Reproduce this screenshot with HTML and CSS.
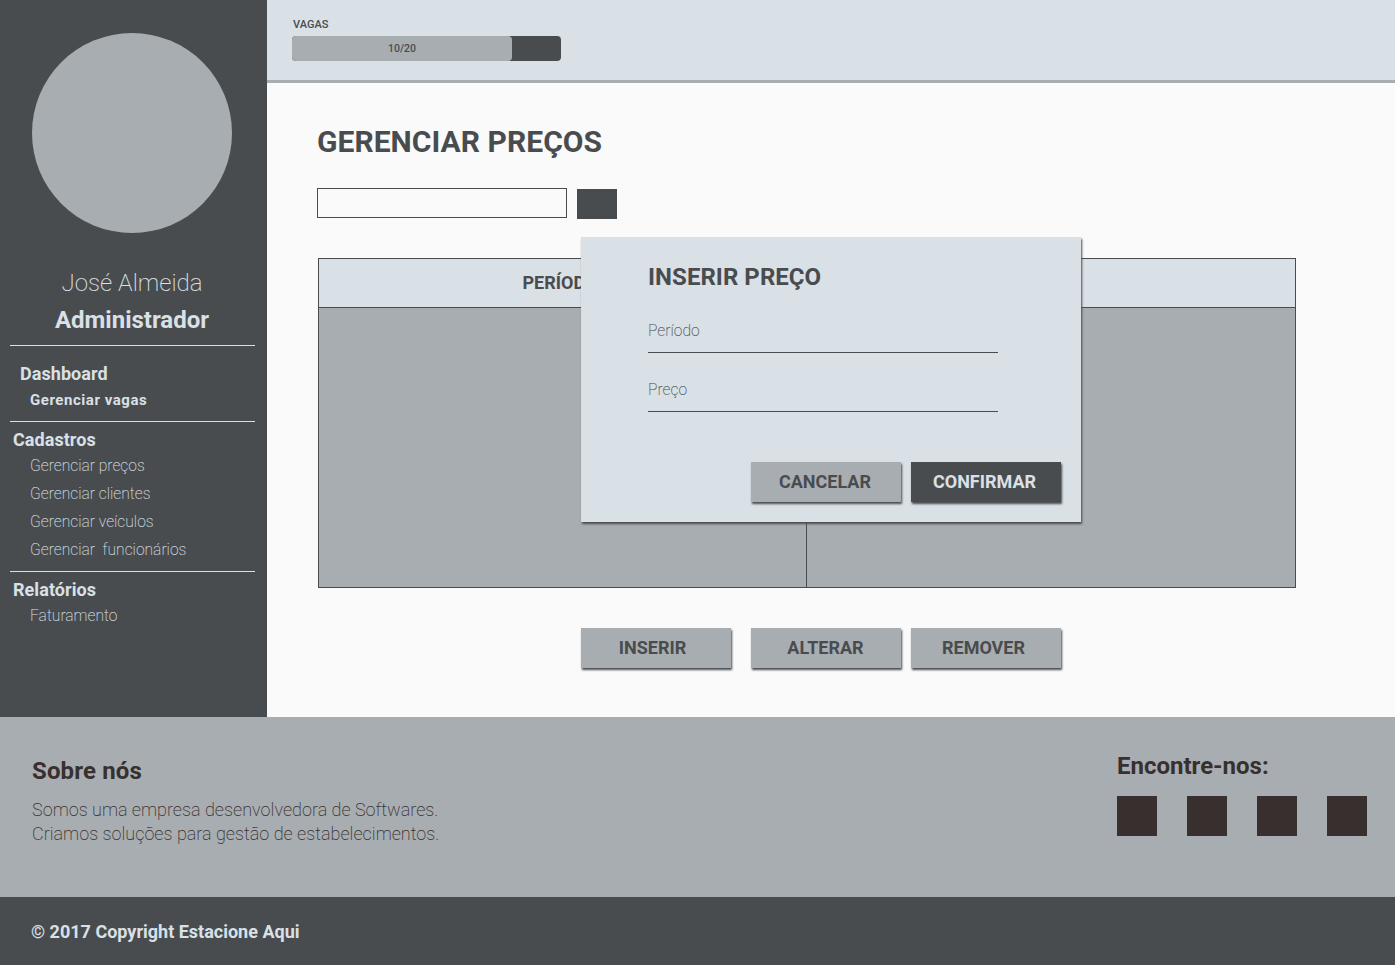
FILE: index.html
```html
<!DOCTYPE html>
<html lang="pt-BR">
<head>
    <meta charset="UTF-8">
    <meta name="viewport" content="width=device-width, initial-scale=1.0">
    <title>Gerenciar Preços - Estacione Aqui</title>
    <link rel="stylesheet" href="styles.css">
</head>
<body>

    <div class="topo">
        <!-- Menu lateral -->
        <aside class="lateral">
            <div class="avatar"></div>
            <div class="nome">José Almeida</div>
            <div class="cargo">Administrador</div>

            <nav class="menu menu-dash">
                <h4 class="menu-titulo titulo-dash">Dashboard</h4>
                <a class="ativo">Gerenciar vagas</a>
            </nav>
            <nav class="menu">
                <h4 class="menu-titulo">Cadastros</h4>
                <a>Gerenciar preços</a>
                <a>Gerenciar clientes</a>
                <a>Gerenciar veículos</a>
                <a>Gerenciar&nbsp; funcionários</a>
            </nav>
            <nav class="menu">
                <h4 class="menu-titulo">Relatórios</h4>
                <a>Faturamento</a>
            </nav>
        </aside>

        <div class="conteudo">
            <!-- Barra de vagas -->
            <header class="barra">
                <div class="vagas-label">VAGAS</div>
                <div class="vagas">
                    <div class="vagas-cheio">10/20</div>
                </div>
            </header>

            <main class="principal">
                <h1>GERENCIAR PREÇOS</h1>

                <div class="busca">
                    <input type="text" class="busca-campo">
                    <button class="busca-botao"></button>
                </div>

                <div class="tabela">
                    <div class="tabela-cab">
                        <div class="cel-cab">PERÍODO</div>
                        <div class="cel-cab">PREÇO</div>
                    </div>
                    <div class="tabela-corpo">
                        <div class="cel"></div>
                        <div class="cel"></div>
                    </div>
                </div>

                <div class="acoes">
                    <button class="btn btn-inserir">INSERIR</button>
                    <button class="btn btn-alterar">ALTERAR</button>
                    <button class="btn btn-remover">REMOVER</button>
                </div>
            </main>
        </div>
    </div>

    <!-- Rodapé -->
    <footer class="rodape">
        <div class="sobre">
            <h3>Sobre nós</h3>
            <p>Somos uma empresa desenvolvedora de Softwares.<br>Criamos soluções para gestão de estabelecimentos.</p>
        </div>
        <div class="redes">
            <h3>Encontre-nos:</h3>
            <div class="redes-lista">
                <span></span><span></span><span></span><span></span>
            </div>
        </div>
    </footer>
    <div class="copyright">© 2017 Copyright Estacione Aqui</div>

    <!-- Modal de inserir preço -->
    <div class="modal">
        <h2>INSERIR PREÇO</h2>
        <div class="campo">Período</div>
        <div class="campo">Preço</div>
        <div class="modal-acoes">
            <button class="btn btn-cancelar">CANCELAR</button>
            <button class="btn btn-escuro">CONFIRMAR</button>
        </div>
    </div>

</body>
</html>
```

FILE: styles.css
```css
body {
    font-family: Roboto, sans-serif;
    background-color: #fafafa;
    color: #494c4f;
    margin: 0;
    padding: 0;
    position: relative;
}

h1, h2, h3, h4, p {
    margin: 0;
}

button {
    font-family: Roboto, sans-serif;
    border: 0;
    padding: 0;
}

.topo {
    display: flex;
    height: 717px;
}

/* Menu lateral */
.lateral {
    width: 267px;
    flex-shrink: 0;
    background-color: #494c4f;
    color: #d9e0e6;
    padding-top: 33px;
    box-sizing: border-box;
}

.avatar {
    width: 200px;
    height: 200px;
    margin-left: 32px;
    border-radius: 50%;
    background-color: #a8adb1;
}

.nome {
    margin-top: 36px;
    padding-right: 3px;
    text-align: center;
    font-size: 24px;
    font-weight: 200;
    line-height: 28px;
}

.cargo {
    margin-top: 9px;
    padding-right: 3px;
    text-align: center;
    font-size: 24px;
    font-weight: 700;
    line-height: 29px;
}

.menu {
    margin: 0 12px 0 10px;
    padding: 6px 0 7px;
    border-top: 1px solid #d9e0e6;
}

.menu-dash {
    margin-top: 10px;
    padding-top: 16px;
}

.menu-titulo {
    font-size: 18px;
    font-weight: 700;
    line-height: 24px;
    padding-left: 3px;
    letter-spacing: 0.06px;
}

.titulo-dash {
    padding-left: 10px;
}

.menu a {
    display: block;
    padding-left: 20px;
    font-size: 15.6px;
    font-weight: 200;
    line-height: 28px;
}

.menu a.ativo {
    font-weight: 700;
    font-size: 15px;
    letter-spacing: 0.55px;
}

/* Barra de vagas */
.conteudo {
    flex: 1;
    display: flex;
    flex-direction: column;
}

.barra {
    height: 83px;
    box-sizing: border-box;
    background-color: #d9e0e6;
    border-bottom: 3px solid #a8adb1;
    padding: 18px 0 0 25px;
}

.vagas-label {
    font-size: 11px;
    font-weight: 500;
    line-height: 13px;
    padding-left: 1px;
}

.vagas {
    width: 269px;
    height: 25px;
    margin-top: 5px;
    background-color: #494c4f;
    border-radius: 4px;
}

.vagas-cheio {
    width: 220px;
    height: 25px;
    line-height: 25px;
    background-color: #a8adb1;
    border-radius: 4px;
    text-align: center;
    font-size: 10.5px;
    font-weight: 500;
}

/* Conteúdo principal */
.principal {
    flex: 1;
    padding: 41px 0 0 50px;
    box-sizing: border-box;
}

h1 {
    font-size: 30px;
    font-weight: 700;
    line-height: 36px;
    letter-spacing: 0.05px;
}

.busca {
    display: flex;
    margin-top: 28px;
    gap: 10px;
}

.busca-campo {
    width: 250px;
    height: 30px;
    box-sizing: border-box;
    border: 1px solid #494c4f;
    background-color: #fafafa;
    padding: 0;
}

.busca-botao {
    width: 40px;
    height: 30px;
    margin-top: 1px;
    background-color: #494c4f;
}

.tabela {
    width: 978px;
    height: 330px;
    margin: 39px 0 0 1px;
    box-sizing: border-box;
    border: 1px solid #494c4f;
    display: flex;
    flex-direction: column;
}

.tabela-cab {
    display: flex;
    height: 48px;
    background-color: #d9e0e6;
    border-bottom: 1px solid #494c4f;
}

.cel-cab {
    flex: 1;
    text-align: center;
    font-size: 18px;
    font-weight: 700;
    line-height: 48px;
    padding-right: 6px;
}

.tabela-corpo {
    flex: 1;
    display: flex;
    background-color: #a8adb1;
}

.cel {
    width: 50%;
    box-sizing: border-box;
}

.cel:first-child {
    border-right: 1px solid #494c4f;
}

.acoes {
    display: flex;
    margin: 40px 0 0 264px;
    gap: 10px;
}

.btn {
    width: 150px;
    height: 40px;
    background-color: #a8adb1;
    color: #494c4f;
    font-size: 18px;
    font-weight: 700;
    box-shadow: 1px 2px 2px #494c4f;
    text-align: center;
    padding-bottom: 2px;
}

.btn-inserir {
    margin-right: 10px;
    padding-right: 7px;
}

.btn-alterar {
    padding-right: 1px;
}

.btn-remover {
    padding-right: 5px;
}

.btn-cancelar {
    padding-right: 2px;
}

.btn-escuro {
    background-color: #494c4f;
    color: #d9e0e6;
    padding-right: 3px;
}

/* Rodapé */
.rodape {
    height: 180px;
    background-color: #a8adb1;
    color: #38302f;
    display: flex;
    justify-content: space-between;
    padding: 0 28px 0 32px;
    box-sizing: border-box;
}

.rodape h3 {
    font-size: 24px;
    font-weight: 700;
    line-height: 28px;
}

.sobre {
    padding-top: 40px;
}

.sobre h3 {
    letter-spacing: 0.15px;
}

.sobre p {
    margin-top: 13px;
    font-size: 18px;
    font-weight: 200;
    line-height: 24px;
}

.redes {
    padding-top: 35px;
    width: 250px;
}

.redes-lista {
    display: flex;
    gap: 30px;
    margin-top: 16px;
}

.redes-lista span {
    width: 40px;
    height: 40px;
    background-color: #38302f;
}

.copyright {
    height: 68px;
    background-color: #494c4f;
    color: #d9e0e6;
    font-size: 18px;
    font-weight: 700;
    line-height: 70px;
    padding-left: 31px;
    box-sizing: border-box;
}

/* Modal */
.modal {
    position: absolute;
    left: 581px;
    top: 237px;
    width: 500px;
    height: 285px;
    box-sizing: border-box;
    background-color: #d9e0e6;
    box-shadow: 1px 2px 2px #494c4f;
    padding: 26px 20px 0 67px;
}

.modal h2 {
    font-size: 24px;
    font-weight: 700;
    line-height: 28px;
    letter-spacing: 0.05px;
}

.campo {
    width: 350px;
    height: 30px;
    padding-top: 7px;
    margin-top: 24px;
    border-bottom: 1px solid #494c4f;
    font-size: 15.6px;
    font-weight: 200;
    line-height: 18px;
}

.campo + .campo {
    margin-top: 21px;
}

.modal-acoes {
    display: flex;
    justify-content: flex-end;
    gap: 10px;
    margin-top: 50px;
}
```
